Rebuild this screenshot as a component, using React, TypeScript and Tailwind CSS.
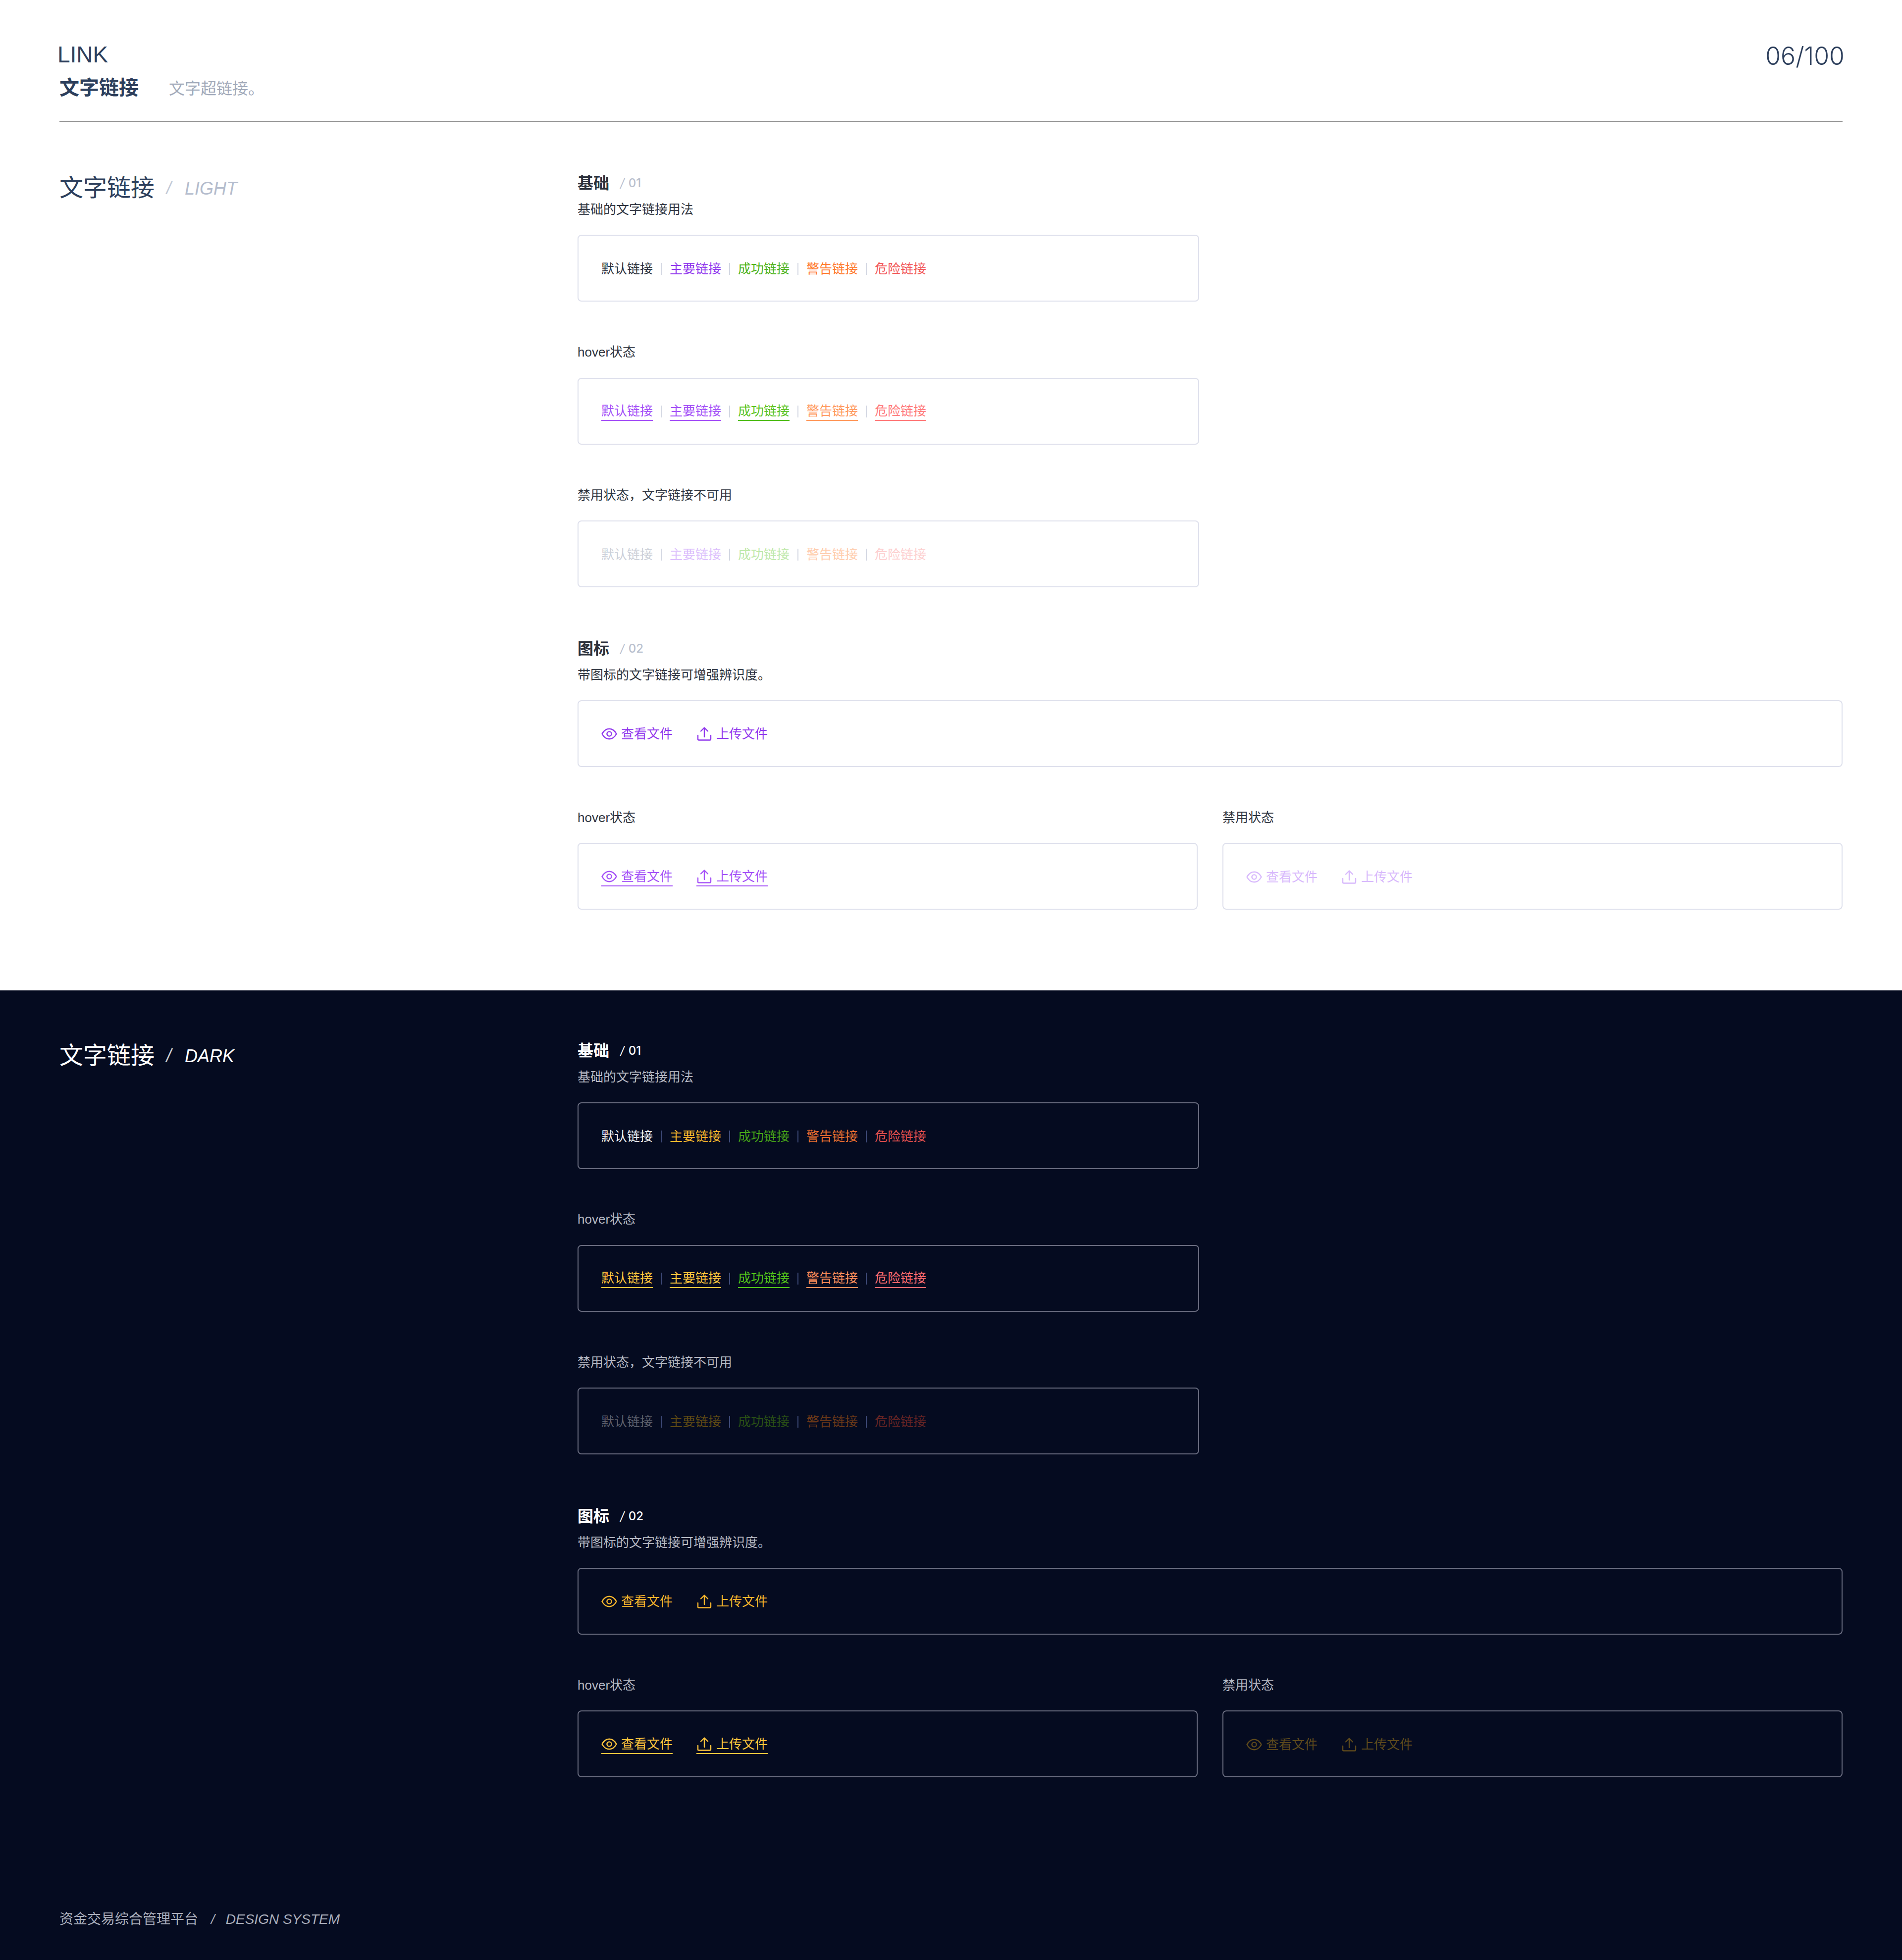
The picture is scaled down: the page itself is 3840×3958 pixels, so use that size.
import React from "react";

const FONT = "font-['Liberation_Sans','Noto_Sans_CJK_SC',sans-serif]";

type Tone = {
  page: string;
  label: string;
  heading: string;
  num: string;
  box: string;
  divider: string;
  title: string;
  titleSub: string;
  base: string[];
  hover: string[];
  hoverLine: string[];
  disabled: string[];
  icon: string;
  iconHover: string;
  iconDisabled: string;
  firstGap: string;
  headingGap: string;
};

const light: Tone = {
  page: "bg-white",
  label: "text-[#2e3440]",
  heading: "text-[#2b303b]",
  num: "text-[#b9c0ce]",
  box: "border-[#dee0ec]",
  divider: "bg-[#d3d7e2]",
  title: "text-[#2d3f5c]",
  titleSub: "text-[#b4bccd]",
  base: ["text-[#2e3440]", "text-[#9138ed]", "text-[#4db31a]", "text-[#ff7a2e]", "text-[#f25858]"],
  hover: ["text-[#a552f7]", "text-[#a552f7]", "text-[#5cc423]", "text-[#ff9a5e]", "text-[#ff7a7a]"],
  hoverLine: ["border-[#a552f7]", "border-[#a552f7]", "border-[#52bd1c]", "border-[#ff9a5e]", "border-[#ff7a7a]"],
  disabled: ["text-[#ccd0d9]", "text-[#dcbffc]", "text-[#bfe9ab]", "text-[#ffcdae]", "text-[#fdd0d0]"],
  icon: "text-[#9138ed]",
  iconHover: "text-[#a552f7] border-[#a552f7]",
  iconDisabled: "text-[#d8b9fc]",
  firstGap: "mt-[82px]",
  headingGap: "mt-[104px]",
};

const dark: Tone = {
  page: "bg-[#050b20]",
  label: "text-[#b6b9c3]",
  heading: "text-white",
  num: "text-white",
  box: "border-[#6a6d80]",
  divider: "bg-[#3e4a78]",
  title: "text-white",
  titleSub: "text-white",
  base: ["text-[#f0f1f3]", "text-[#f5b52c]", "text-[#46a318]", "text-[#ea7030]", "text-[#e0504f]"],
  hover: ["text-[#ffc53d]", "text-[#ffc53d]", "text-[#52c41a]", "text-[#ff8f5c]", "text-[#ff6b70]"],
  hoverLine: ["border-[#ffc53d]", "border-[#ffc53d]", "border-[#52c41a]", "border-[#ff8f5c]", "border-[#ff6b70]"],
  disabled: ["text-[#5c5f6b]", "text-[#5f4a14]", "text-[#2a5015]", "text-[#6a3818]", "text-[#662424]"],
  icon: "text-[#f5b52c]",
  iconHover: "text-[#ffc53d] border-[#ffc53d]",
  iconDisabled: "text-[#5e4a1c]",
  firstGap: "mt-[81px]",
  headingGap: "mt-[105px]",
};

const NAMES = ["默认链接", "主要链接", "成功链接", "警告链接", "危险链接"];

function EyeIcon() {
  return (
    <svg viewBox="0 0 32 32" className="w-8 h-8 shrink-0" fill="none" stroke="currentColor" strokeWidth="2.4">
      <path d="M1.5 16C5 9.5 10.5 5.8 16 5.8S27 9.5 30.5 16C27 22.5 21.5 26.2 16 26.2S5 22.5 1.5 16Z" strokeLinejoin="round" />
      <circle cx="16" cy="16" r="4.6" />
    </svg>
  );
}

function UploadIcon() {
  return (
    <svg viewBox="0 0 32 32" className="w-8 h-8 shrink-0" fill="none" stroke="currentColor" strokeWidth="2.4" strokeLinecap="round" strokeLinejoin="round">
      <path d="M3 19V26.5A2 2 0 0 0 5 28.5H27A2 2 0 0 0 29 26.5V19" />
      <path d="M16 22V4M9 10.5L16 3.5L23 10.5" />
    </svg>
  );
}

function Links({ colors, lines, tone }: { colors: string[]; lines?: string[]; tone: Tone }) {
  return (
    <div className="flex items-center">
      {NAMES.map((n, i) => (
        <React.Fragment key={n}>
          {i > 0 && <span className={`w-[2px] h-6 mx-4 ${tone.divider}`} />}
          <span className={`block text-[26px] leading-9 ${colors[i]} ${lines ? `border-b-2 ${lines[i]}` : ""}`}>{n}</span>
        </React.Fragment>
      ))}
    </div>
  );
}

function Box({ children, tone, wide, nudge }: { children: React.ReactNode; tone: Tone; wide?: boolean; nudge?: boolean }) {
  return (
    <div className={`h-[135px] flex items-center pl-[46px] border-2 rounded-lg ${tone.box} ${wide ? "w-[1255px]" : "w-full"} ${nudge ? "pt-[2px]" : ""}`}>
      {children}
    </div>
  );
}

function IconLinks({ cls, underline }: { cls: string; underline?: boolean }) {
  const link = `flex items-center gap-2 text-[26px] leading-9 ${cls} ${underline ? "border-b-2" : ""}`;
  return (
    <div className="flex items-center gap-12">
      <span className={link}>
        <EyeIcon />
        查看文件
      </span>
      <span className={link}>
        <UploadIcon />
        上传文件
      </span>
    </div>
  );
}

function Label({ tone, children, gap }: { tone: Tone; children: React.ReactNode; gap: string }) {
  return <p className={`text-[26px] leading-10 ${tone.label} ${gap}`}>{children}</p>;
}

function Heading({ tone, title, num, gap }: { tone: Tone; title: string; num: string; gap?: string }) {
  return (
    <h3 className={`flex items-center h-10 ${gap ?? ""}`}>
      <span className={`text-[32px] font-semibold ${tone.heading}`}>{title}</span>
      <span className={`ml-[22px] text-2xl font-medium font-['Inter','Liberation_Sans',sans-serif] ${tone.num}`}>
        <span className="italic mr-2 font-normal">/</span>
        {num}
      </span>
    </h3>
  );
}

function Content({ tone, name }: { tone: Tone; name: string }) {
  return (
    <div className="grid grid-cols-[1046px_1fr] px-[120px]">
      <div className="flex items-center h-14 self-start mt-[2px]">
        <span className={`text-5xl ${tone.title}`}>文字链接</span>
        <span className={`ml-6 mr-[27px] text-4xl italic opacity-80 ${tone.titleSub}`}>/</span>
        <span className={`text-4xl italic pt-[2px] ${tone.titleSub}`}>{name}</span>
      </div>
      <div>
        <Heading tone={tone} title="基础" num="01" />
        <Label tone={tone} gap="mt-[13px] mb-[31px]">基础的文字链接用法</Label>
        <Box tone={tone} wide nudge><Links colors={tone.base} tone={tone} /></Box>
        <Label tone={tone} gap={`${tone.firstGap} mb-8`}>hover状态</Label>
        <Box tone={tone} wide><Links colors={tone.hover} lines={tone.hoverLine} tone={tone} /></Box>
        <Label tone={tone} gap="mt-[82px] mb-[31px]">禁用状态，文字链接不可用</Label>
        <Box tone={tone} wide nudge><Links colors={tone.disabled} tone={tone} /></Box>

        <Heading tone={tone} title="图标" num="02" gap={tone.headingGap} />
        <Label tone={tone} gap="mt-[13px] mb-[31px]">带图标的文字链接可增强辨识度。</Label>
        <Box tone={tone}><IconLinks cls={tone.icon} /></Box>
        <div className="grid grid-cols-2 gap-x-[50px]">
          <div>
            <Label tone={tone} gap="mt-[82px] mb-[31px]">hover状态</Label>
            <Box tone={tone} nudge><IconLinks cls={tone.iconHover} underline /></Box>
          </div>
          <div>
            <Label tone={tone} gap="mt-[82px] mb-[31px]">禁用状态</Label>
            <Box tone={tone} nudge><IconLinks cls={tone.iconDisabled} /></Box>
          </div>
        </div>
      </div>
    </div>
  );
}

export default function App() {
  return (
    <div className={`w-[3840px] ${FONT}`}>
      <section className={`${light.page} h-[2000px]`}>
        <header className="mx-[120px] pt-[82px] pb-[39px] border-b-2 border-[#979797] flex justify-between">
          <div>
            <h1 className="text-[46px] leading-14 -ml-1 text-[#2d3f5c]">LINK</h1>
            <div className="flex items-center mt-[11px] h-14">
              <span className="text-[40px] font-semibold text-[#2d3f5c]">文字链接</span>
              <span className="ml-[61px] mt-1 text-[32px] text-[#a2aaba]">文字超链接。</span>
            </div>
          </div>
          <div className="text-[50px] leading-14 -mr-1 mt-[3px] font-light font-['Inter',sans-serif] text-[#2d3f5c]">06/100</div>
        </header>
        <div className="pt-[104px]">
          <Content tone={light} name="LIGHT" />
        </div>
      </section>
      <section className={`${dark.page} h-[1958px] flex flex-col`}>
        <div className="pt-[102px]">
          <Content tone={dark} name="DARK" />
        </div>
        <footer className="mt-[267px] px-[120px] flex items-center h-10 text-[28px] text-[#a9adba]">
          <span>资金交易综合管理平台</span>
          <span className="italic ml-[26px] mr-[22px]">/</span>
          <span className="italic">DESIGN SYSTEM</span>
        </footer>
      </section>
    </div>
  );
}
